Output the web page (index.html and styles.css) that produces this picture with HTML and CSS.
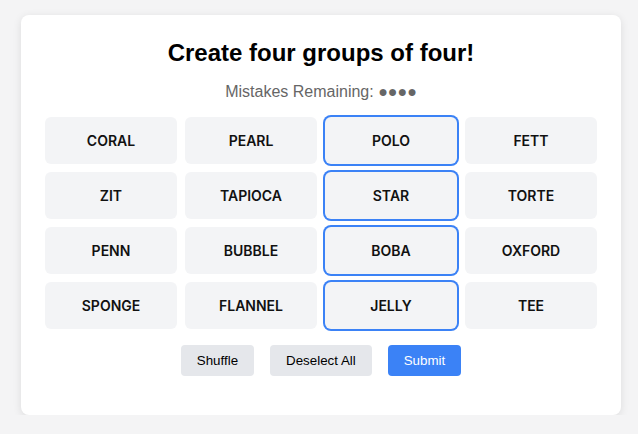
FILE: index.html
```html
<!DOCTYPE html>
<html lang="en">
<head>
<meta charset="utf-8">
<title>Connections</title>
<link rel="stylesheet" href="styles.css">
</head>
<body>
<main class="card">
  <h1 class="title">Create four groups of four!</h1>
  <p class="mistakes">Mistakes Remaining: <span class="dots">●●●●</span></p>
  <div class="grid">
    <button class="tile">CORAL</button>
    <button class="tile">PEARL</button>
    <button class="tile selected">POLO</button>
    <button class="tile">FETT</button>
    <button class="tile">ZIT</button>
    <button class="tile">TAPIOCA</button>
    <button class="tile selected">STAR</button>
    <button class="tile">TORTE</button>
    <button class="tile">PENN</button>
    <button class="tile">BUBBLE</button>
    <button class="tile selected">BOBA</button>
    <button class="tile">OXFORD</button>
    <button class="tile">SPONGE</button>
    <button class="tile">FLANNEL</button>
    <button class="tile selected">JELLY</button>
    <button class="tile">TEE</button>
  </div>
  <div class="actions">
    <button class="btn">Shuffle</button>
    <button class="btn">Deselect All</button>
    <button class="btn primary">Submit</button>
  </div>
</main>
</body>
</html>
```
FILE: styles.css
```css
html, body {
  margin: 0;
  padding: 0;
}
body {
  background: #f4f4f5;
  font-family: "Liberation Sans", Arial, sans-serif;
  padding: 15px 0 0 21px;
}
.card {
  box-sizing: border-box;
  width: 600px;
  min-height: 400px;
  background: #ffffff;
  border-radius: 8px;
  box-shadow: 0 2px 8px rgba(0, 0, 0, 0.1);
  padding: 24px;
}
.title {
  margin: 0 0 16px;
  font-size: 24px;
  font-weight: bold;
  text-align: center;
  color: #000;
  line-height: normal;
}
.mistakes {
  margin: 0 0 16px;
  font-size: 16px;
  color: #666666;
  text-align: center;
  line-height: normal;
}
.dots {
  font-size: 16px;
  color: #666666;
}
.grid {
  display: grid;
  grid-template-columns: repeat(4, 132px);
  grid-auto-rows: 47px;
  gap: 8px;
}
.tile {
  border: none;
  border-radius: 6px;
  background: #f3f4f6;
  font-family: Inter, "Noto Sans", sans-serif;
  font-weight: 600;
  font-size: 14px;
  color: #111111;
  padding: 0;
  margin: 0;
}
.tile.selected {
  box-shadow: 0 0 0 2px #3b82f6;
}
.actions {
  margin-top: 16px;
  display: flex;
  justify-content: center;
  gap: 16px;
}
.btn {
  font-family: "Liberation Sans", Arial, sans-serif;
  font-size: 13.333px;
  padding: 8px 16px;
  border: none;
  border-radius: 4px;
  background: #e5e7eb;
  color: #000;
  margin: 0;
  line-height: normal;
}
.btn.primary {
  background: #3b82f6;
  color: #ffffff;
}
```
